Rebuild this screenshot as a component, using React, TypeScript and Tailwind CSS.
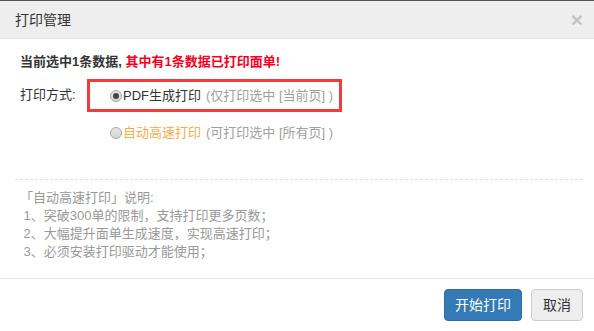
const font = { fontFamily: '"Liberation Sans", Arial, "Noto Sans CJK SC", sans-serif' };

function Radio({ checked }: { checked?: boolean }) {
  return (
    <span className="inline-flex w-[12px] h-[12px] mr-[1px] rounded-full border border-[#a8a8a8] bg-gradient-to-b from-[#e6e6e6] to-[#d4d4d4] items-center justify-center shrink-0">
      {checked && <span className="w-[6px] h-[6px] rounded-full bg-[#444]" />}
    </span>
  );
}

export default function App() {
  return (
    <div style={font} className="w-[594px] h-[331px] bg-white border-t border-[#555] flex flex-col text-[13px] leading-[18px] text-[#333] overflow-hidden">
      <div className="h-[38px] shrink-0 bg-[#eeeeee] border-b border-[#e5e5e5] pl-[15px] pr-[11px] flex items-center justify-between">
        <span className="text-[14px]">打印管理</span>
        <span className="text-[21px] font-bold text-[#c4c4c4] leading-none">×</span>
      </div>

      <div className="pl-[20px] pt-[14px]">
        <p className="font-bold">
          当前选中1条数据, <span className="text-[#f5001f]">其中有1条数据已打印面单!</span>
        </p>

        <div className="flex mt-[8px]">
          <span className="w-[67px] shrink-0 pt-[7px]">打印方式:</span>
          <div className="flex flex-col">
            <label className="w-[255px] h-[33px] border-[3px] border-[#f53a3a] pl-[20px] flex items-center whitespace-nowrap text-[13px]">
              <Radio checked />
              <span className="text-[#333]">PDF生成打印</span>
              <span className="text-[#a0a0a0] ml-[5px]">(仅打印选中 [当前页] )</span>
            </label>
            <label className="h-[33px] mt-[4px] pl-[23px] flex items-center whitespace-nowrap text-[13px]">
              <Radio />
              <span className="text-[#f0ad4e]">自动高速打印</span>
              <span className="text-[#a0a0a0] ml-[5px]">(可打印选中 [所有页] )</span>
            </label>
          </div>
        </div>
      </div>

      <div className="ml-[15px] mr-[11px] mt-[30px] border-t border-dashed border-[#e0e0e0]" />

      <div className="pl-[20px] mt-[9px] text-[#999]">
        <p>「自动高速打印」说明:</p>
        <p>&nbsp;1、突破300单的限制，支持打印更多页数；</p>
        <p>&nbsp;2、大幅提升面单生成速度，实现高速打印；</p>
        <p>&nbsp;3、必须安装打印驱动才能使用；</p>
      </div>

      <div className="mt-auto h-[53px] border-t border-[#e5e5e5] pt-[10px] pr-[11px] flex justify-end gap-[9px]">
        <button className="w-[78px] h-[32px] rounded-[4px] bg-[#337ab7] border border-[#2e6da4] text-white text-[14px]">
          开始打印
        </button>
        <button className="w-[52px] h-[32px] rounded-[4px] bg-[#eeeeee] border border-[#cccccc] text-[#333] text-[14px]">
          取消
        </button>
      </div>
    </div>
  );
}
